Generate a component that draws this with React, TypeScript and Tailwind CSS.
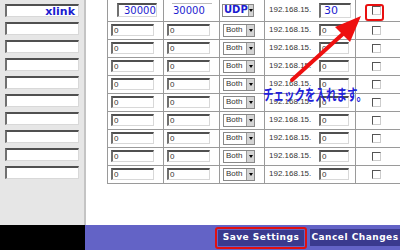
import React from "react";

const rows = Array.from({ length: 9 });

const Inset: React.FC<{ className?: string; children?: React.ReactNode }> = ({ className, children }) => (
  <div
    className={
      "bg-white border-t-2 border-l-2 border-t-[#505050] border-l-[#707070] border-b border-r border-b-[#d8d8d8] border-r-[#d8d8d8] flex items-center overflow-hidden " +
      (className || "")
    }
  >
    {children}
  </div>
);

const Select: React.FC<{ label: string; strong?: boolean }> = ({ label, strong }) => (
  <div className="flex items-center h-[13px] w-[32px] border border-[#888] bg-white">
    <span
      className={
        strong
          ? "flex-1 pl-[1px] text-[10px] font-bold text-[#1c1cd0] leading-none font-['DejaVu_Sans',sans-serif]"
          : "flex-1 pl-[2px] text-[8px] text-[#333] leading-none"
      }
    >
      {label}
    </span>
    <span className="w-[8px] h-[11px] bg-[#d4d4d4] border-l border-[#999] flex items-center justify-center">
      <span className="w-0 h-0 border-l-[2px] border-r-[2px] border-t-[3px] border-l-transparent border-r-transparent border-t-black" />
    </span>
  </div>
);

const Check: React.FC = () => (
  <div className="w-[9px] h-[9px] bg-white border border-t-[#555] border-l-[#555] border-b-[#ccc] border-r-[#ccc]" />
);

const App: React.FC = () => {
  return (
    <div className="w-[400px] h-[252px] overflow-hidden relative bg-white font-['Liberation_Sans',Arial,sans-serif]">
      <div className="flex h-[225px]">
        {/* left panel */}
        <div className="w-[86px] shrink-0 bg-[#e6e6e6] border-r-2 border-[#c4c4c4] flex flex-col gap-[5px] pt-[4px] pl-[5px]">
          <Inset className="w-[74px] h-[13px] justify-end pr-[3px]">
            <span className="text-[11px] font-bold text-[#1c1cd0] font-['DejaVu_Sans',sans-serif] leading-none">xlink</span>
          </Inset>
          {rows.map((_, i) => (
            <Inset key={i} className="w-[74px] h-[13px]" />
          ))}
        </div>

        {/* table */}
        <div className="flex-1 pl-[21px] overflow-hidden">
          <table className="border-collapse w-[300px] table-fixed">
            <colgroup>
              <col className="w-[56px]" />
              <col className="w-[56px]" />
              <col className="w-[45px]" />
              <col className="w-[91px]" />
              <col className="w-[52px]" />
            </colgroup>
            <tbody>
              <tr className="h-[21px]">
                <td className="border border-t-0 border-[#9a9a9a] pl-[9px]">
                  <Inset className="w-[40px] h-[14px] pl-[5px] border-t-[#888] border-l-[#888]">
                    <span className="text-[10px] text-[#1c1cd0] font-['DejaVu_Sans',sans-serif] leading-none">30000</span>
                  </Inset>
                </td>
                <td className="border border-t-0 border-[#9a9a9a] pl-[8px]">
                  <div className="w-[40px] h-[14px] border-t border-[#bbb] flex items-center pl-[1px]">
                    <span className="text-[10px] text-[#1c1cd0] font-['DejaVu_Sans',sans-serif] leading-none">30000</span>
                  </div>
                </td>
                <td className="border border-t-0 border-[#9a9a9a] pl-[2px]">
                  <Select label="UDP" strong />
                </td>
                <td className="border border-t-0 border-[#9a9a9a] pl-[4px]">
                  <div className="flex items-center">
                    <span className="text-[8px] text-[#333] w-[50px]">192.168.15.</span>
                    <Inset className="w-[32px] h-[15px] pl-[3px] border-t-[#888] border-l-[#888]">
                      <span className="text-[11px] text-[#1c1cd0] font-['DejaVu_Sans',sans-serif] leading-none">30</span>
                    </Inset>
                  </div>
                </td>
                <td className="border border-t-0 border-[#9a9a9a] pl-[16px]">
                  <Check />
                </td>
              </tr>
              {rows.map((_, i) => (
                <tr key={i} className="h-[18px]">
                  <td className="border border-[#9a9a9a] pl-[3px]">
                    <Inset className="w-[43px] h-[12px] pl-[1px]">
                      <span className="text-[8px] text-[#333] leading-none">0</span>
                    </Inset>
                  </td>
                  <td className="border border-[#9a9a9a] pl-[3px]">
                    <Inset className="w-[43px] h-[12px] pl-[1px]">
                      <span className="text-[8px] text-[#333] leading-none">0</span>
                    </Inset>
                  </td>
                  <td className="border border-[#9a9a9a] pl-[3px]">
                    <Select label="Both" />
                  </td>
                  <td className="border border-[#9a9a9a] pl-[4px]">
                    <div className="flex items-center">
                      <span className="text-[8px] text-[#333] w-[50px]">192.168.15.</span>
                      <Inset className="w-[30px] h-[12px] pl-[1px]">
                        <span className="text-[8px] text-[#333] leading-none">0</span>
                      </Inset>
                    </div>
                  </td>
                  <td className="border border-[#9a9a9a] pl-[16px]">
                    <Check />
                  </td>
                </tr>
              ))}
            </tbody>
          </table>
        </div>
      </div>

      {/* bottom bar */}
      <div className="flex h-[25px]">
        <div className="w-[86px] bg-black" />
        <div className="flex-1 bg-[#6363c6] flex items-center pl-[130px] gap-[3px]">
          <div className="rounded-[3px] border-2 border-[#e01010] p-[1px]">
            <div className="h-[16px] w-[86px] bg-[#3a3a8e] flex items-center justify-center">
              <span className="text-[9px] font-bold text-white tracking-[0.5px] font-['DejaVu_Sans',sans-serif]">Save Settings</span>
            </div>
          </div>
          <div className="h-[17px] w-[90px] bg-[#3a3a8e] flex items-center justify-center">
            <span className="text-[9px] font-bold text-white tracking-[0.5px] font-['DejaVu_Sans',sans-serif] whitespace-nowrap">Cancel Changes</span>
          </div>
        </div>
      </div>

      {/* annotation */}
      <div className="absolute left-[365px] top-[4px] w-[19px] h-[17px] rounded-[3px] border-2 border-[#e81010]" />
      <svg className="absolute left-0 top-0" width="400" height="252" viewBox="0 0 400 252">
        <line x1="292" y1="80" x2="345" y2="32" stroke="#ee1010" strokeWidth="4" strokeLinecap="round" />
        <polygon points="361,16 335,27 350,42" fill="#ee1010" />
      </svg>
      <div className="absolute left-[263px] top-[83px] whitespace-nowrap">
        <span className="inline-block origin-left scale-x-[0.7] text-[15px] font-bold text-[#2020d8] font-['Noto_Sans_CJK_JP',sans-serif] leading-none">
          チェックを入れます。
        </span>
      </div>
    </div>
  );
};

export default App;
